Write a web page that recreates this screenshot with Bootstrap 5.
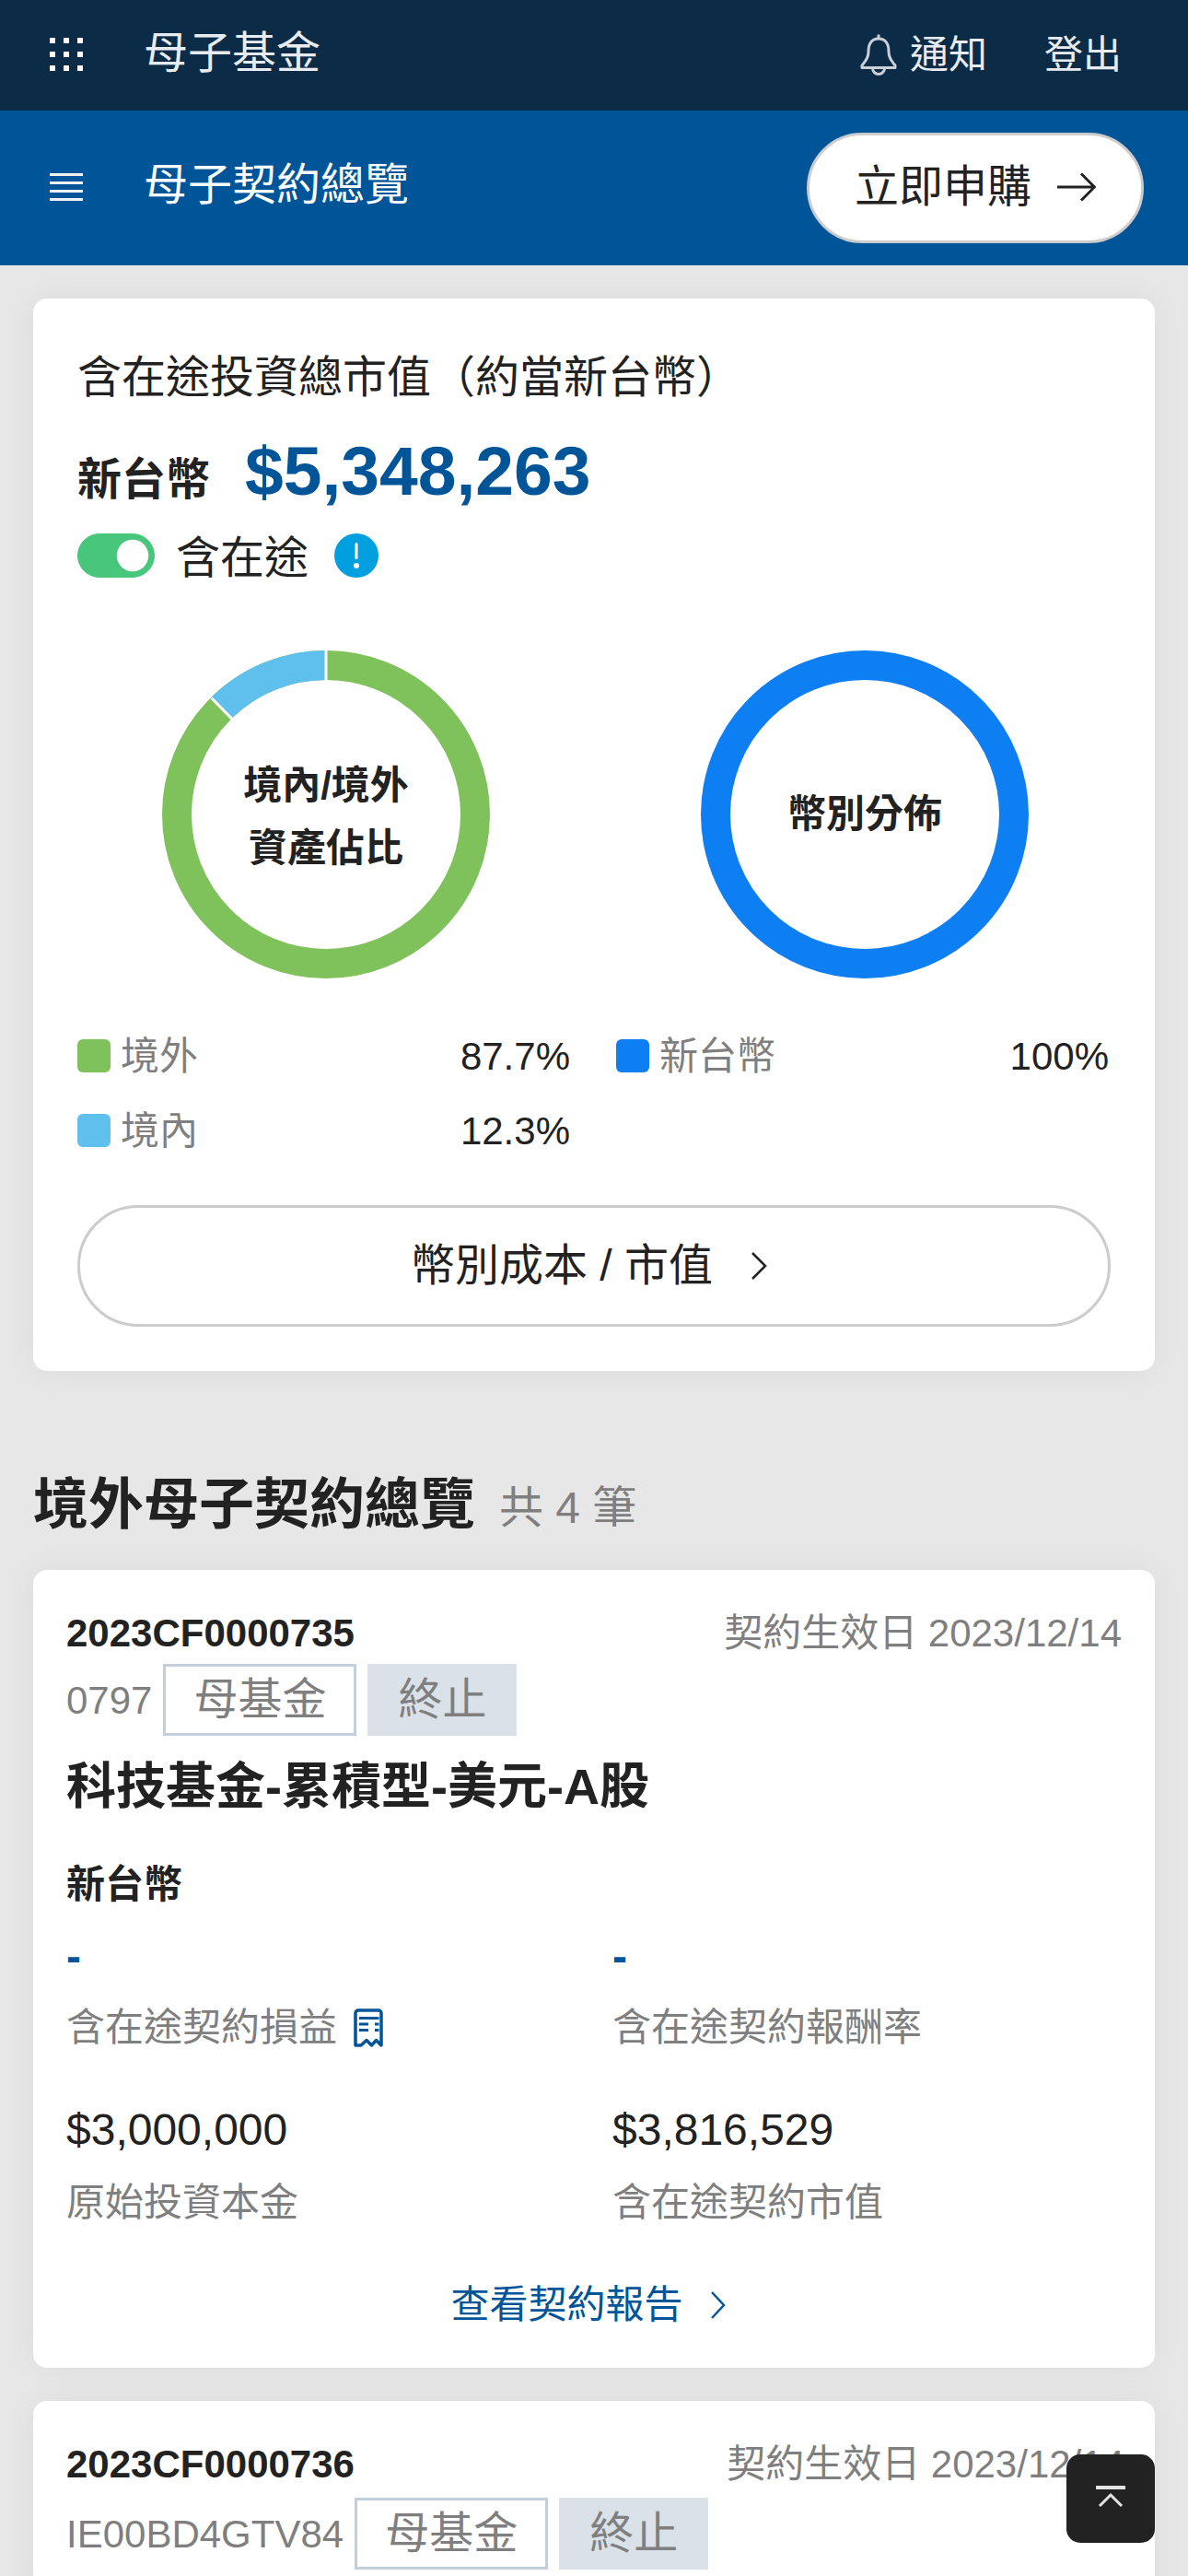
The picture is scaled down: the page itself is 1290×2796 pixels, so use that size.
<!DOCTYPE html>
<html lang="zh-Hant">
<head>
<meta charset="utf-8">
<title>母子契約總覽</title>
<link href="https://cdn.jsdelivr.net/npm/bootstrap@5.3.0/dist/css/bootstrap.min.css" rel="stylesheet">
<style>
html,body{margin:0;background:#e7e7e7}
body{font-family:"Liberation Sans","Noto Sans CJK TC",sans-serif;color:#222;font-size:42px;line-height:63px}
.screen{height:2796px;overflow:hidden}
.topbar{height:120px;background:#0b2b47;color:#e8ebef;padding:0 72px 0 54px}
.subbar{height:168px;background:#005598;color:#fff;padding:0 48px 0 54px}
.barttl{font-size:48px;line-height:72px;margin-left:66px;margin-bottom:4px}
.barttl2{margin-bottom:6px}
.dots{width:36px;height:36px;margin-bottom:2px}
.topacts{margin-bottom:2px}
.notice{margin-left:14px}
.logout{margin-left:62px}
.btn-buy{width:366px;height:120px;border:3px solid #ccc;border-radius:60px;background:#fff;color:#222;font-size:48px;line-height:72px;gap:28px;padding:0 0 2px}
.btn-buy:hover{background:#fff;color:#222;border-color:#ccc}
.panel{background:#fff;border-radius:15px;box-shadow:0 0 36px rgba(0,0,0,.05);margin:0 36px}
.sum{margin-top:36px;padding:50px 48px 49px;height:1164px}
.sumttl{font-size:48px;line-height:72px}
.amtrow{margin-top:17px;height:116px}
.amtcur{font-size:48px;font-weight:700;line-height:72px}
.amtval{font-size:75px;font-weight:700;color:#005598;line-height:96px;margin-left:38px}
.form-check-input.tgl{width:84px;height:48px;margin:0;background-color:#48c77c;border-color:#48c77c;box-shadow:none}
.form-switch.tglwrap{padding:0;min-height:0;margin:0;line-height:0}
.tglrow{height:48px}
.tgltxt{font-size:48px;line-height:72px;margin-left:23px;margin-right:28px;padding-top:5px}
.cols{display:grid;grid-template-columns:537px 537px;column-gap:48px}
.chartsrow{margin-top:79px}
.ringbox{width:356px;height:356px;position:relative;margin-left:92px}
.ringtxt{position:absolute;inset:0;font-size:42px;font-weight:700;line-height:68px;text-align:center}
.ringtxt.first{padding-top:5px}
.lgd{margin-top:53px}
.lgdrow{height:81px;font-size:42px;line-height:63px}
.sw{width:36px;height:36px;border-radius:6px;margin:13px 11px 0 0;flex:none}
.sw-out{background:#7fc15a}
.sw-in{background:#5fbfed}
.sw-twd{background:#0d7ff2}
.lgdname{color:#7f7f7f}
.lgdval{margin-left:auto;padding-right:2px}
.btn-cost{height:132px;border:3px solid #ccc;border-radius:66px;background:#fff;color:#222;font-size:48px;line-height:72px;margin-top:31px;gap:41px;padding:0 11px 0 0}
.btn-cost:hover{background:#fff;color:#222;border-color:#ccc}
.sect{margin:66px 36px 0;height:150px;padding-top:10px}
.sectname{font-size:60px;font-weight:700;line-height:90px}
.sectcount{font-size:48px;color:#7f7f7f;line-height:72px;margin-left:26px;padding-top:6px}
.ctr{padding:36px 36px 37px 36px}
.ctr+.ctr{margin-top:36px}
.cid{font-weight:700;line-height:66px;height:66px}
.cdate{color:#7f7f7f;line-height:66px}
.cdate.shift{margin-right:-3px}
.tagrow{height:78px;gap:12px;color:#7f7f7f}
.tagrow.low{margin-top:3px}
.tg{height:78px;font-size:48px;line-height:72px;color:#7f7f7f;padding:0 33px}
.tg1{border:3px solid #c3cfdc;padding:0 30px}
.tg2{background:#dae1e8}
.cname{font-size:54px;font-weight:700;line-height:81px;margin-top:15px}
.ccur{font-weight:700;margin-top:34px}
.kv{display:grid;grid-template-columns:593px 1fr;margin-top:11px}
.kv .v{font-size:48px;line-height:72px}
.kv .dash{color:#005598;font-weight:700}
.kv .l{color:#7f7f7f;margin-top:9px;gap:18px}
.kv2{margin-top:44px}
.kv2 .l{margin-top:11px}
.clink{color:#005598;margin-top:48px;gap:29px;text-decoration:none;padding-right:12px}
.totop{position:fixed;right:36px;bottom:36px;width:96px;height:96px;background:#222;border-radius:15px}
</style>
</head>
<body>
<div class="screen">
  <header class="topbar d-flex align-items-center">
    <svg class="dots" viewBox="0 0 36 36" fill="#fff" aria-hidden="true">
      <rect x="0" y="0" width="6" height="6"/><rect x="15" y="0" width="6" height="6"/><rect x="30" y="0" width="6" height="6"/>
      <rect x="0" y="15" width="6" height="6"/><rect x="15" y="15" width="6" height="6"/><rect x="30" y="15" width="6" height="6"/>
      <rect x="0" y="30" width="6" height="6"/><rect x="15" y="30" width="6" height="6"/><rect x="30" y="30" width="6" height="6"/>
    </svg>
    <div class="barttl">母子基金</div>
    <div class="topacts ms-auto d-flex align-items-center">
      <svg width="40" height="46" viewBox="0 0 40 46" fill="none" stroke="#c9d0d8" stroke-width="3" stroke-linejoin="round" aria-hidden="true">
        <path d="M20 1.5V6"/>
        <path d="M20 6C11.5 6 9 13 9 20C9 28 5 31 2 35V37.5H38V35C35 31 31 28 31 20C31 13 28.500 6 20 6Z"/>
        <path d="M13.500 38a6.500 6.500 0 0 0 13 0"/>
      </svg>
      <span class="notice">通知</span>
      <span class="logout">登出</span>
    </div>
  </header>

  <div class="subbar d-flex align-items-center">
    <svg class="dots" viewBox="0 0 36 30" fill="#eef2f6" aria-hidden="true">
      <rect y="0" width="36" height="3"/><rect y="9" width="36" height="3"/><rect y="18" width="36" height="3"/><rect y="27" width="36" height="3"/>
    </svg>
    <div class="barttl barttl2">母子契約總覽</div>
    <button type="button" class="btn btn-buy ms-auto d-flex align-items-center justify-content-center">
      <span>立即申購</span>
      <svg width="42" height="32" viewBox="0 0 42 32" fill="none" stroke="#222" stroke-width="3" aria-hidden="true"><path d="M0 16H40M26 1.500L40.500 16L26 30.500"/></svg>
    </button>
  </div>

  <section class="panel sum">
    <div class="sumttl">含在途投資總市值（約當新台幣）</div>
    <div class="amtrow d-flex align-items-baseline"><span class="amtcur">新台幣</span><span class="amtval">$5,348,263</span></div>
    <div class="tglrow d-flex align-items-center">
      <div class="form-check form-switch tglwrap"><input class="form-check-input tgl" type="checkbox" role="switch" checked aria-label="含在途"></div>
      <span class="tgltxt">含在途</span>
      <svg width="48" height="48" viewBox="0 0 48 48" aria-hidden="true"><circle cx="24" cy="24" r="24" fill="#00a0e0"/><rect x="22.500" y="10" width="3" height="18" rx="1.500" fill="#fff"/><circle cx="24" cy="35" r="3" fill="#fff"/></svg>
    </div>

    <div class="cols chartsrow">
      <div class="ringbox">
        <svg width="356" height="356" viewBox="0 0 356 356" aria-hidden="true">
          <circle cx="178" cy="178" r="162" fill="none" stroke="#7fc15a" stroke-width="32"/>
          <circle cx="178" cy="178" r="162" fill="none" stroke="#5fbfed" stroke-width="32" stroke-dasharray="125.200 892.700" transform="rotate(-134.280 178 178)"/>
          <path d="M178 0V34M53.800 51.800L77.500 75.900" stroke="#fff" stroke-width="3"/>
        </svg>
        <div class="ringtxt first d-flex align-items-center justify-content-center"><div>境內/境外<br>資產佔比</div></div>
      </div>
      <div class="ringbox">
        <svg width="356" height="356" viewBox="0 0 356 356" aria-hidden="true"><circle cx="178" cy="178" r="162" fill="none" stroke="#0d7ff2" stroke-width="32"/></svg>
        <div class="ringtxt d-flex align-items-center justify-content-center"><div>幣別分佈</div></div>
      </div>
    </div>

    <div class="cols lgd">
      <div>
        <div class="lgdrow d-flex align-items-start"><span class="sw sw-out"></span><span class="lgdname">境外</span><span class="lgdval">87.7%</span></div>
        <div class="lgdrow d-flex align-items-start"><span class="sw sw-in"></span><span class="lgdname">境內</span><span class="lgdval">12.3%</span></div>
      </div>
      <div>
        <div class="lgdrow d-flex align-items-start"><span class="sw sw-twd"></span><span class="lgdname">新台幣</span><span class="lgdval">100%</span></div>
      </div>
    </div>

    <button type="button" class="btn btn-cost w-100 d-flex align-items-center justify-content-center">
      <span>幣別成本 / 市值</span>
      <svg width="18" height="30" viewBox="0 0 18 30" fill="none" stroke="#222" stroke-width="2.500" aria-hidden="true"><path d="M2 1L16 15L2 29"/></svg>
    </button>
  </section>

  <div class="sect d-flex align-items-center"><span class="sectname">境外母子契約總覽</span><span class="sectcount">共 4 筆</span></div>

  <article class="panel ctr">
    <div class="d-flex justify-content-between"><span class="cid">2023CF0000735</span><span class="cdate">契約生效日 2023/12/14</span></div>
    <div class="tagrow d-flex align-items-center"><span>0797</span><span class="tg tg1 d-flex align-items-center">母基金</span><span class="tg tg2 d-flex align-items-center">終止</span></div>
    <div class="cname">科技基金-累積型-美元-A股</div>
    <div class="ccur">新台幣</div>
    <div class="kv">
      <div><div class="v dash">-</div><div class="l d-flex align-items-center">含在途契約損益
        <svg width="32" height="42" viewBox="0 0 32 42" fill="none" stroke="#005598" stroke-width="3.500" stroke-linejoin="round" aria-hidden="true"><path d="M2 40V5A3 3 0 0 1 5 2H27A3 3 0 0 1 30 5V40L24.500 34.500L19.500 40L14 34.500L8 40L2 40Z"/><path d="M6 10.500H27.500M6 17H16M23 17H27.500M6 23.500H16M23 23.500H27.500" stroke-width="3"/></svg>
      </div></div>
      <div><div class="v dash">-</div><div class="l">含在途契約報酬率</div></div>
    </div>
    <div class="kv kv2">
      <div><div class="v">$3,000,000</div><div class="l">原始投資本金</div></div>
      <div><div class="v">$3,816,529</div><div class="l">含在途契約市值</div></div>
    </div>
    <a href="#" class="clink d-flex align-items-center justify-content-center">
      <span>查看契約報告</span>
      <svg width="18" height="32" viewBox="0 0 18 32" fill="none" stroke="#005598" stroke-width="2.500" aria-hidden="true"><path d="M2 2L15 16L2 30"/></svg>
    </a>
  </article>

  <article class="panel ctr">
    <div class="d-flex justify-content-between"><span class="cid">2023CF0000736</span><span class="cdate shift">契約生效日 2023/12/14</span></div>
    <div class="tagrow low d-flex align-items-center"><span>IE00BD4GTV84</span><span class="tg tg1 d-flex align-items-center">母基金</span><span class="tg tg2 d-flex align-items-center">終止</span></div>
  </article>
</div>

<a href="#" class="totop d-flex align-items-center justify-content-center" aria-label="回到頂部">
  <svg width="32" height="28" viewBox="0 0 32 28" fill="none" stroke="#e4e4e4" aria-hidden="true"><path d="M0 2H32" stroke-width="4"/><path d="M4 22L16 10L28 22" stroke-width="3"/></svg>
</a>
<script src="https://cdn.jsdelivr.net/npm/bootstrap@5.3.0/dist/js/bootstrap.bundle.min.js"></script>
</body>
</html>
